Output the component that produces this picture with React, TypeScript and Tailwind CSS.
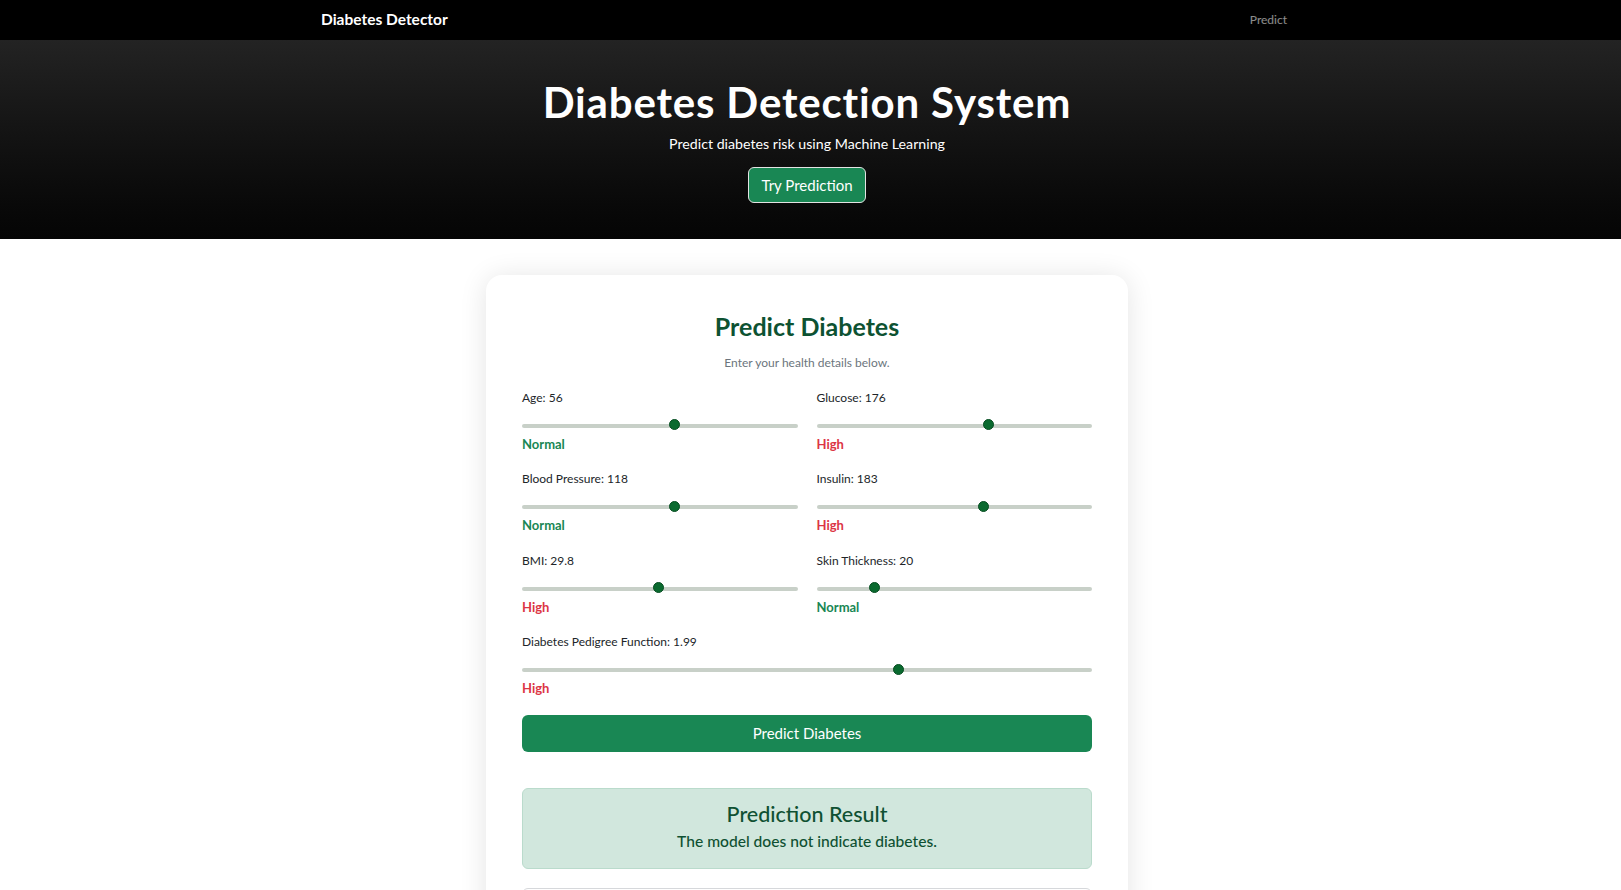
import { useState } from "react";

type Field = {
  key: string;
  label: string;
  min: number;
  max: number;
  step: number;
  high: (v: number) => boolean;
  wide?: boolean;
};

const fields: Field[] = [
  { key: "age", label: "Age", min: 1, max: 100, step: 1, high: (v) => v > 80 },
  { key: "glucose", label: "Glucose", min: 50, max: 250, step: 1, high: (v) => v > 140 },
  { key: "bp", label: "Blood Pressure", min: 40, max: 180, step: 1, high: (v) => v > 140 },
  { key: "insulin", label: "Insulin", min: 0, max: 300, step: 1, high: (v) => v > 166 },
  { key: "bmi", label: "BMI", min: 10, max: 50, step: 0.1, high: (v) => v > 25 },
  { key: "skin", label: "Skin Thickness", min: 0, max: 100, step: 1, high: (v) => v > 50 },
  { key: "dpf", label: "Diabetes Pedigree Function", min: 0, max: 3, step: 0.01, high: (v) => v > 1, wide: true },
];

const rangeCls =
  "block w-full h-4 appearance-none bg-transparent cursor-pointer focus:outline-none " +
  "[&::-webkit-slider-runnable-track]:h-[4px] [&::-webkit-slider-runnable-track]:rounded-full [&::-webkit-slider-runnable-track]:bg-[#c8d0c8] " +
  "[&::-webkit-slider-thumb]:appearance-none [&::-webkit-slider-thumb]:w-[11px] [&::-webkit-slider-thumb]:h-[11px] [&::-webkit-slider-thumb]:mt-[-4.5px] " +
  "[&::-webkit-slider-thumb]:rounded-full [&::-webkit-slider-thumb]:bg-[#0a6a2f] [&::-webkit-slider-thumb]:border [&::-webkit-slider-thumb]:border-[#064d21]";

export default function App() {
  const [values, setValues] = useState<Record<string, number>>({
    age: 56,
    glucose: 176,
    bp: 118,
    insulin: 183,
    bmi: 29.8,
    skin: 20,
    dpf: 1.99,
  });

  return (
    <div className="min-h-screen bg-white font-['Lato','Noto_Sans',sans-serif] text-[#212529]">
      <nav className="h-10 bg-black pr-[7px]">
        <div className="w-[972px] h-full mx-auto flex items-center justify-between">
          <a href="#" className="text-[15.5px] font-bold text-white">
            Diabetes Detector
          </a>
          <a href="#predict" className="text-[12px] text-white/55 pr-[6px]">
            Predict
          </a>
        </div>
      </nav>

      <header className="bg-gradient-to-b from-[#232323] to-[#050505] pr-[7px] pt-[37px] pb-[36px] text-center text-white">
        <h1 className="text-[42px] leading-[1.2] font-bold tracking-[0.02em]">Diabetes Detection System</h1>
        <p className="mt-[6px] text-[14.2px] leading-[21px]">Predict diabetes risk using Machine Learning</p>
        <button className="mt-[13px] h-[36px] px-3 rounded-md border border-[#e3e3e3] bg-[#198754] text-[15px] text-white">
          Try Prediction
        </button>
      </header>

      <main className="pr-[7px] pt-9">
        <div id="predict" className="w-[642px] mx-auto bg-white rounded-2xl shadow-[0_2px_28px_rgba(0,0,0,0.11)] px-9 pt-[36px] pb-8">
          <h2 className="text-center text-[25px] leading-[30px] font-bold text-[#0d5232]">Predict Diabetes</h2>
          <p className="mt-[13px] text-center text-[12px] leading-[18px] text-[#6c757d]">
            Enter your health details below.
          </p>

          <form className="mt-[16.5px]" onSubmit={(e) => e.preventDefault()}>
            <div className="grid grid-cols-2 gap-x-[19px] gap-y-[16.5px]">
              {fields.map((f) => {
                const v = values[f.key];
                const isHigh = f.high(v);
                return (
                  <div key={f.key} className={f.wide ? "col-span-2" : ""}>
                    <label className="block text-[12px] leading-[18px]">
                      {f.label}: {v}
                    </label>
                    <div className="mt-[11px]">
                      <input
                        type="range"
                        min={f.min}
                        max={f.max}
                        step={f.step}
                        value={v}
                        onChange={(e) => setValues({ ...values, [f.key]: Number(e.target.value) })}
                        className={rangeCls}
                      />
                    </div>
                    <div
                      className={
                        "text-[13px] leading-[20px] font-bold " +
                        (isHigh ? "text-[#dc3545]" : "text-[#198754]")
                      }
                    >
                      {isHigh ? "High" : "Normal"}
                    </div>
                  </div>
                );
              })}
            </div>

            <button className="mt-[16.5px] w-full h-[37px] rounded-md bg-[#198754] text-[15px] text-white">
              Predict Diabetes
            </button>
          </form>

          <div className="mt-9 rounded-md border border-[#badbcc] bg-[#d1e7dd] pt-[11px] pb-[15px] text-center text-[#0f5132]">
            <h4 className="text-[21.5px] leading-[28px] font-medium">Prediction Result</h4>
            <p className="mt-px text-[15.6px] leading-[24px] font-medium">The model does not indicate diabetes.</p>
          </div>

          <div className="mt-[19px] rounded-md border border-[#d6d8db] p-4">
            <h5 className="text-[17px] font-medium">Your Inputs</h5>
            <ul className="mt-2 text-[13px] leading-6 text-[#495057]">
              {fields.map((f) => (
                <li key={f.key}>
                  {f.label}: {values[f.key]}
                </li>
              ))}
            </ul>
          </div>
        </div>
      </main>
    </div>
  );
}
